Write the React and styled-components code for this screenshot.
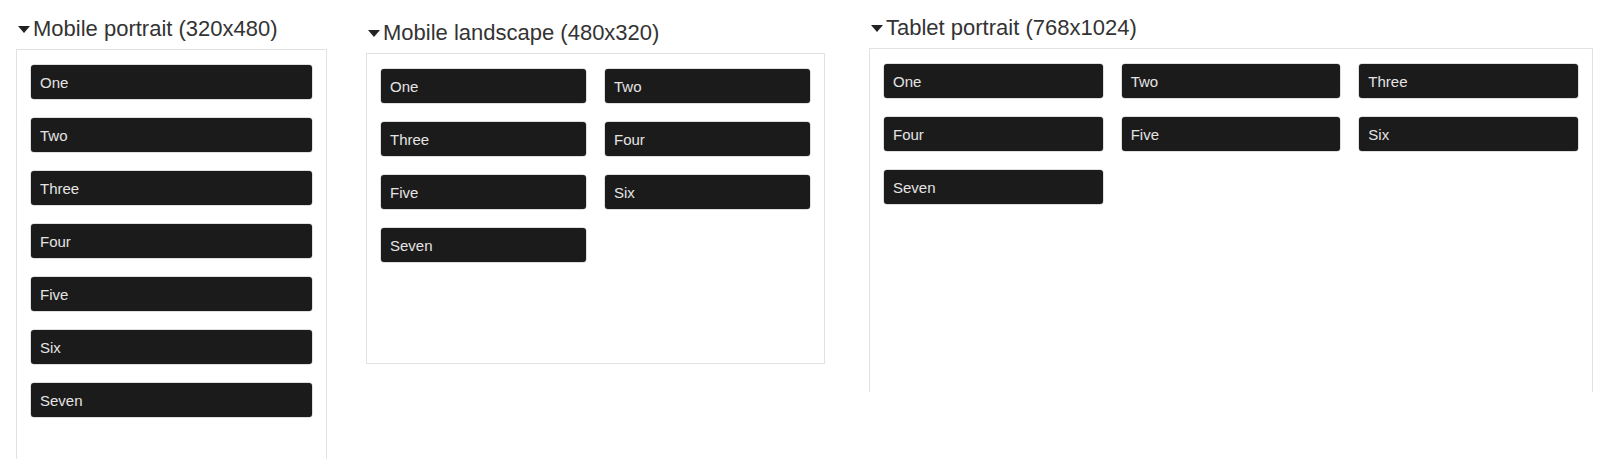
import React from "react";
import styled, { createGlobalStyle } from "styled-components";

const Global = createGlobalStyle`
  html, body { margin: 0; padding: 0; background: #ffffff; overflow: hidden; }
  body { font-family: "Liberation Sans", Arial, sans-serif; }
`;

const Page = styled.div`
  display: flex;
  align-items: flex-start;
  padding-left: 16px;
`;

const Section = styled.section`
  flex: none;
  width: ${(p) => p.$width}px;
  margin-top: ${(p) => p.$top}px;
  margin-right: ${(p) => p.$after}px;
`;

const Title = styled.div`
  display: flex;
  align-items: center;
  height: 26px;
  line-height: 26px;
  margin-bottom: 7px;
  padding-left: 2px;
  font-size: 22px;
  color: #333333;
  white-space: nowrap;
`;

const Caret = styled.span`
  width: 0;
  height: 0;
  border-left: 6px solid transparent;
  border-right: 6px solid transparent;
  border-top: 7px solid #222222;
  margin-right: 3px;
  margin-top: 1px;
`;

const Frame = styled.div`
  box-sizing: border-box;
  height: ${(p) => p.$height}px;
  border: 1px solid #e2e2e2;
  border-bottom: ${(p) => (p.$clipped ? "none" : "1px solid #e2e2e2")};
  padding: 15px 14px;
  background: #ffffff;
`;

const Grid = styled.div`
  display: grid;
  grid-template-columns: repeat(${(p) => p.$cols}, 1fr);
  column-gap: 19px;
  row-gap: 19px;
`;

const Item = styled.div`
  box-sizing: border-box;
  height: 34px;
  display: flex;
  align-items: center;
  padding: 0 9px;
  background: #1b1b1b;
  border-radius: 3px;
  color: #e4e4e4;
  font-size: 15px;
  box-shadow: 0 0 0 0.5px rgba(0, 0, 0, 0.25);
`;

const items = ["One", "Two", "Three", "Four", "Five", "Six", "Seven"];

const devices = [
  { title: "Mobile portrait (320x480)", width: 311, top: 16, after: 39, height: 410, cols: 1, clipped: true },
  { title: "Mobile landscape (480x320)", width: 459, top: 20, after: 44, height: 311, cols: 2 },
  { title: "Tablet portrait (768x1024)", width: 724, top: 15, after: 0, height: 344, cols: 3, clipped: true },
];

export default function App() {
  return (
    <>
      <Global />
      <Page>
        {devices.map((d) => (
          <Section key={d.title} $width={d.width} $top={d.top} $after={d.after}>
            <Title>
              <Caret />
              {d.title}
            </Title>
            <Frame $height={d.height} $clipped={d.clipped}>
              <Grid $cols={d.cols}>
                {items.map((it) => (
                  <Item key={it}>{it}</Item>
                ))}
              </Grid>
            </Frame>
          </Section>
        ))}
      </Page>
    </>
  );
}
